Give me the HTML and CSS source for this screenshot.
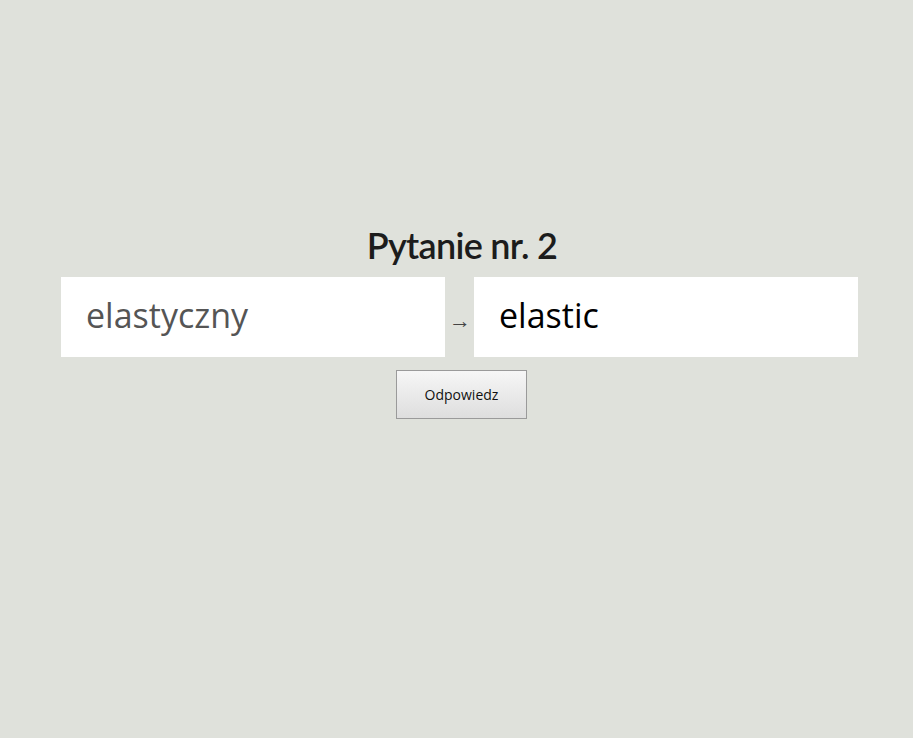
FILE: index.html
```html
<!DOCTYPE html>
<html lang="pl">
<head>
<meta charset="utf-8">
<title>Pytanie</title>
<link rel="stylesheet" href="styles.css">
</head>
<body>
<main class="quiz">
  <h1 class="title">Pytanie nr. 2</h1>
  <div class="pair">
    <div class="field field-question">elastyczny</div>
    <span class="arrow">→</span>
    <input class="field field-answer" type="text" value="elastic">
  </div>
  <button class="answer-btn" type="button">Odpowiedz</button>
</main>
</body>
</html>
```

FILE: styles.css
```css
html, body {
  margin: 0;
  padding: 0;
  height: 100%;
}
body {
  background: #dfe1db;
  font-family: "Open Sans", "Noto Sans", sans-serif;
}
.quiz {
  display: flex;
  flex-direction: column;
  align-items: center;
  padding-top: 222px;
  padding-left: 6px;
}
.title {
  margin: 0 0 9px;
  padding-left: 5px;
  font-family: "Lato", "Noto Sans", sans-serif;
  font-size: 36px;
  font-weight: 600;
  color: #1c1c1c;
  line-height: 46px;
  letter-spacing: -0.7px;
}
.pair {
  display: flex;
  align-items: center;
  gap: 4px;
  margin-bottom: 13px;
}
.field {
  box-sizing: border-box;
  width: 384px;
  height: 80px;
  background: #fff;
  border: none;
  padding: 0 0 4px 25px;
  font-family: "Open Sans", "Noto Sans", sans-serif;
  font-size: 34px;
  display: flex;
  align-items: center;
  margin: 0;
  outline: none;
}
.field-question {
  color: #555;
}
.field-answer {
  color: #000;
  padding-left: 25px;
}
.arrow {
  font-family: "Liberation Serif", serif;
  font-size: 22px;
  color: #444;
  padding-top: 8px;
  width: 21px;
  text-align: center;
}
.answer-btn {
  width: 131px;
  height: 49px;
  border: 1px solid #9a9a9a;
  border-radius: 0;
  background: linear-gradient(#f6f6f6, #dedede);
  font-family: "Open Sans", "Noto Sans", sans-serif;
  font-size: 14px;
  color: #111;
  padding: 0;
  margin-left: 4px;
}
```
